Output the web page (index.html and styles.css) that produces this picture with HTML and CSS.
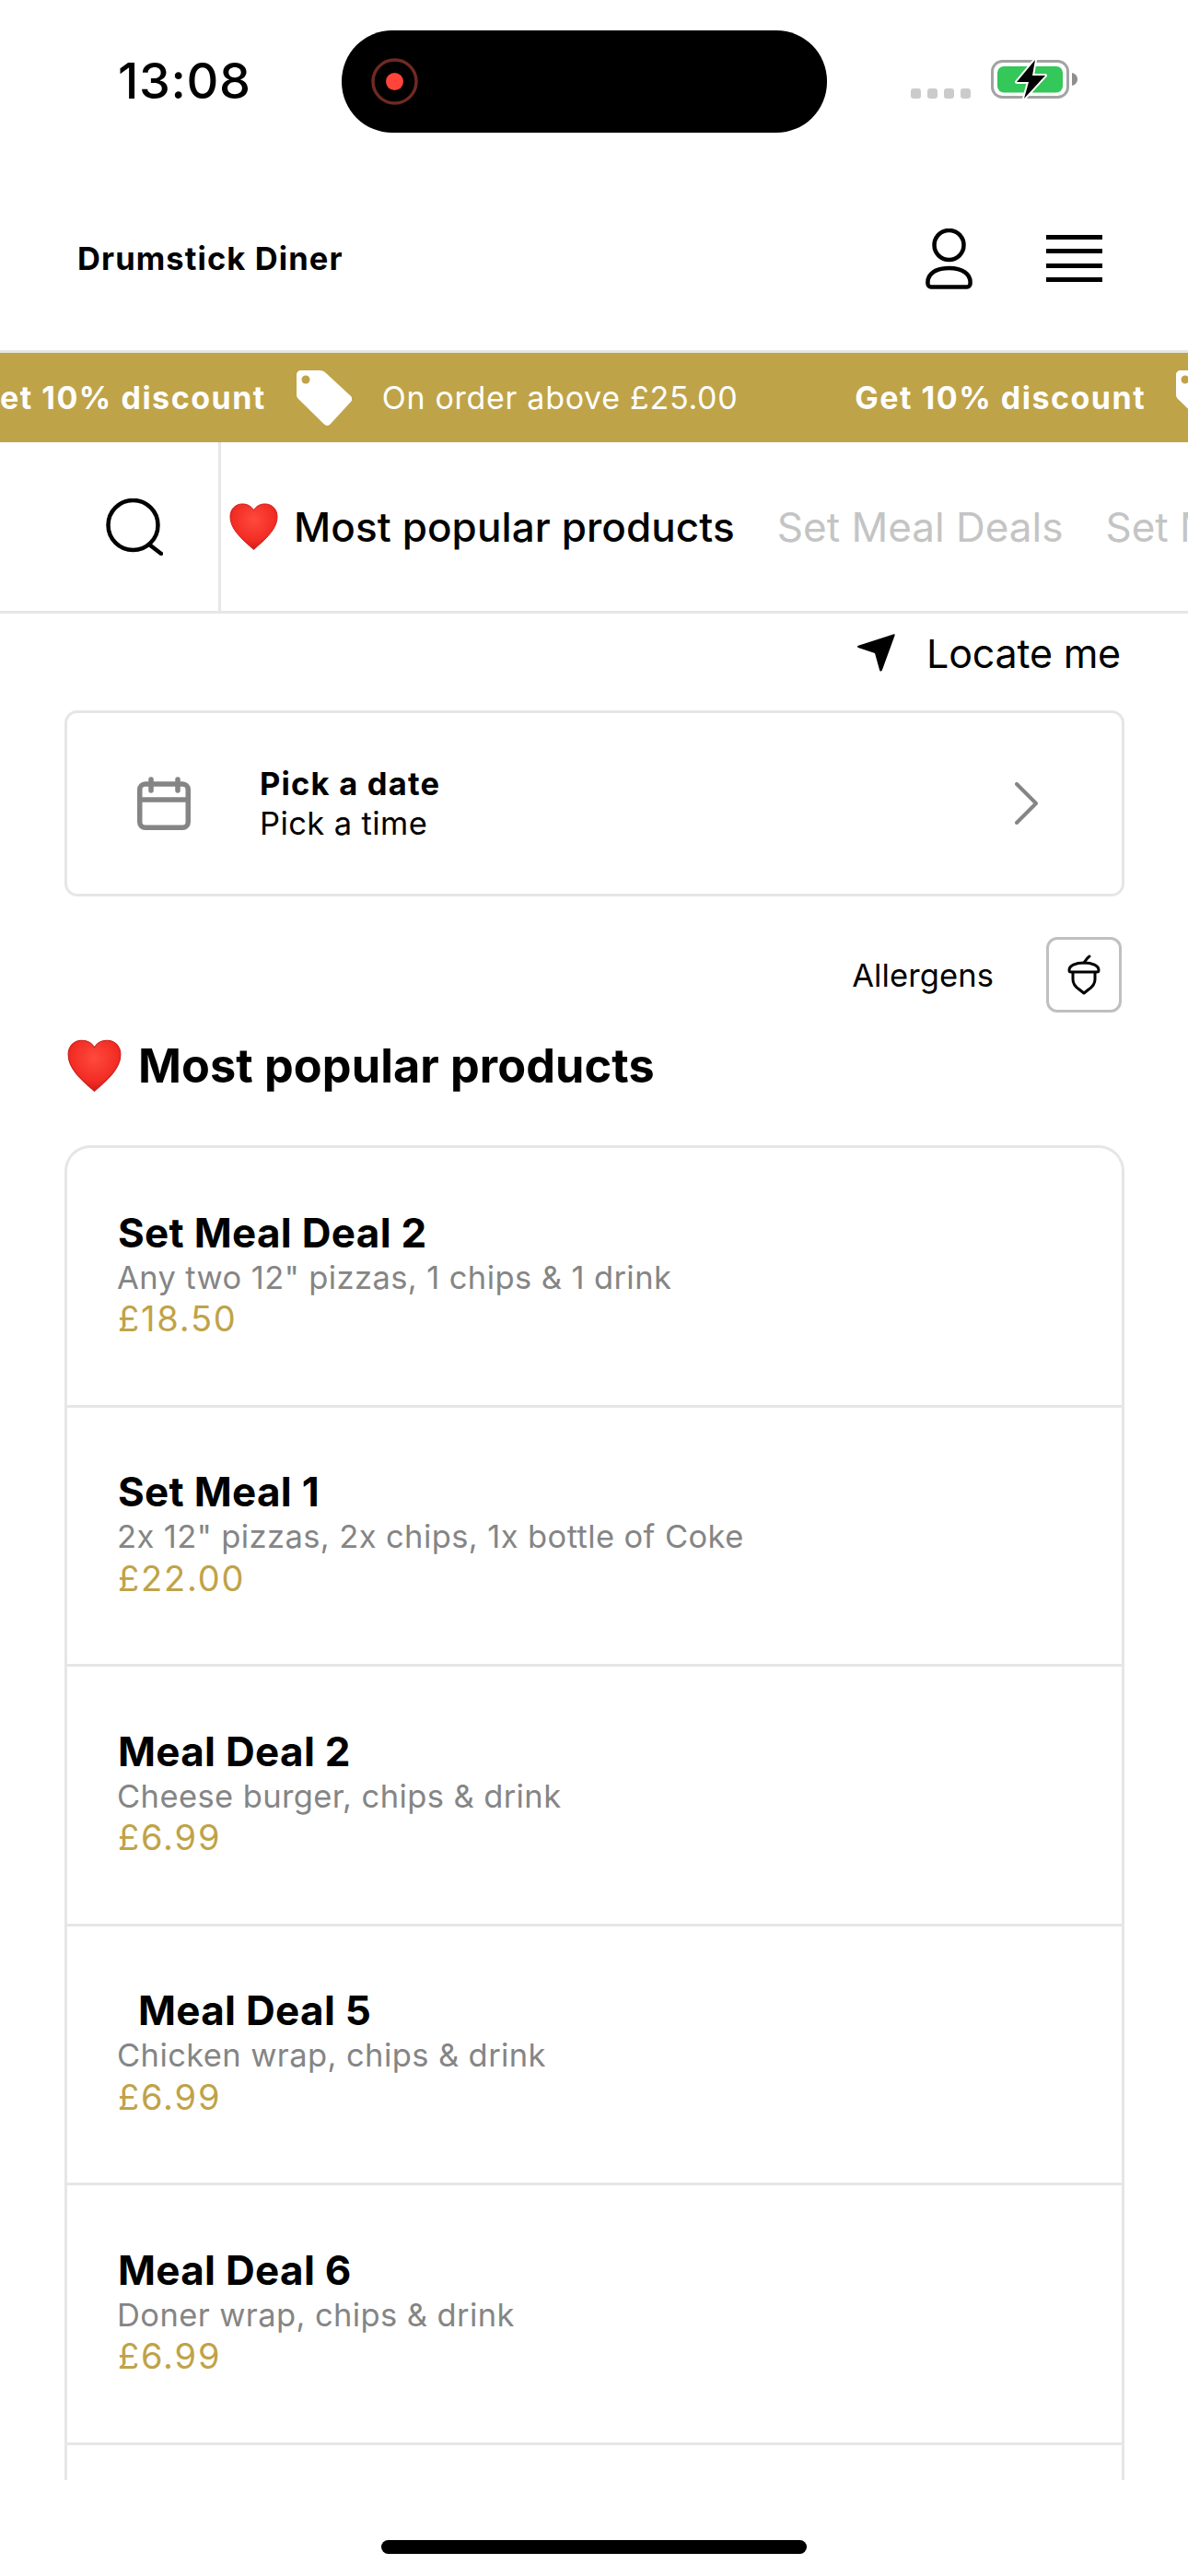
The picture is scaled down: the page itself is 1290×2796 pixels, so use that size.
FILE: index.html
```html
<!DOCTYPE html>
<html lang="en">
<head>
<meta charset="utf-8">
<title>Drumstick Diner</title>
<link rel="stylesheet" href="styles.css">
</head>
<body>
<div class="screen">
  <div class="status">
    <span class="time">13:08</span>
    <div class="island">
      <svg class="rec" viewBox="0 0 51 51" width="51" height="51"><circle cx="25.500" cy="25.500" r="23.500" fill="none" stroke="#6e2a22" stroke-width="3.500"/><circle cx="25.500" cy="25.500" r="9.500" fill="#ff453a"/></svg>
    </div>
    <div class="status-right">
      <div class="signal"><i></i><i></i><i></i><i></i></div>
      <svg class="battery" viewBox="0 0 95 44" width="95" height="44">
        <rect x="1.500" y="2.500" width="82" height="39" rx="11" fill="none" stroke="#a3a3a3" stroke-width="3"/>
        <rect x="7" y="8" width="71" height="28.500" rx="7" fill="#34c759"/>
        <path d="M88 15c4 1 6 4 6 7s-2 6-6 7z" fill="#8e8e8e"/>
        <path d="M48 1 28 25h13l-5 18 23-25H45z" fill="#000" stroke="#fff" stroke-width="4" stroke-linejoin="round" paint-order="stroke"/>
      </svg>
    </div>
  </div>

  <header class="topbar">
    <span class="brand">Drumstick Diner</span>
    <div class="top-icons">
      <svg viewBox="0 0 51 66" width="51" height="66"><circle cx="25.500" cy="18" r="16" fill="none" stroke="#000" stroke-width="4.500"/><path d="M2.500 60c-1-11 9-17 23-17s24 6 23 17c0 2-1.500 3.500-3.500 3.500H6c-2 0-3.500-1.500-3.500-3.500z" fill="none" stroke="#000" stroke-width="4.500"/></svg>
      <div class="burger"><i></i><i></i><i></i><i></i></div>
    </div>
  </header>

  <div class="promo">
    <div class="promo-track">
      <b>Get 10% discount</b>
      <svg class="tag" viewBox="0 0 60 60" width="60" height="60"><path d="M5 0h20c3 0 5 1 7 3l27 25c1.500 1.500 1.500 4 .5 5.500L37 58c-2 2.500-5 2.500-7 .5L2 31c-1.500-1.500-2-3-2-5V5c0-3 2-5 5-5z" fill="#fff"/><circle cx="10" cy="10" r="4.500" fill="#bfa348"/></svg>
      <span class="promo-note">On order above £25.00</span>
      <b>Get 10% discount</b>
      <svg class="tag" viewBox="0 0 60 60" width="60" height="60"><path d="M5 0h20c3 0 5 1 7 3l27 25c1.500 1.500 1.500 4 .5 5.500L37 58c-2 2.500-5 2.500-7 .5L2 31c-1.500-1.500-2-3-2-5V5c0-3 2-5 5-5z" fill="#fff"/><circle cx="10" cy="10" r="4.500" fill="#bfa348"/></svg>
    </div>
  </div>

  <nav class="cats">
    <div class="search-cell">
      <svg viewBox="0 0 62 62" width="62" height="62"><circle cx="29.500" cy="29" r="27" fill="none" stroke="#000" stroke-width="4.500"/><path d="M47 50l13 10" stroke="#000" stroke-width="4.500" stroke-linecap="round"/></svg>
    </div>
    <div class="cat-list">
      <span class="cat active"><svg class="heart-sm" viewBox="0 0 54 52" width="53" height="51"><use href="#heart"/></svg>Most popular products</span>
      <span class="cat">Set Meal Deals</span>
      <span class="cat">Set Meal Deals</span>
    </div>
  </nav>

  <main class="content">
    <div class="locate">
      <svg viewBox="0 0 41 41" width="41" height="41"><path d="M39 .5c1.500-.5 2 0 1.500 1.500L27 39c-.8 2-2.500 2-3 0l-5-18L1 15c-1.500-.5-1.500-1.500 0-2.200z" fill="#000"/></svg>
      <span>Locate me</span>
    </div>

    <div class="picker">
      <svg class="cal" viewBox="0 0 58 58" width="58" height="58"><rect x="2.750" y="8" width="52.500" height="47.250" rx="6" fill="none" stroke="#858585" stroke-width="5.500"/><path d="M2.500 25h53" stroke="#858585" stroke-width="5.500"/><path d="M15 3v12M44 3v12" stroke="#858585" stroke-width="5.500" stroke-linecap="round"/></svg>
      <div class="picker-text"><strong>Pick a date</strong><span>Pick a time</span></div>
      <svg class="chev" viewBox="0 0 25 46" width="25" height="46"><path d="M2 2l21 21L2 44" fill="none" stroke="#858585" stroke-width="4" stroke-linecap="round" stroke-linejoin="round"/></svg>
    </div>

    <div class="allergens">
      <span>Allergens</span>
      <div class="allergen-btn">
        <svg viewBox="0 0 36 44" width="36" height="44"><path d="M18 9c2-3 3-5 6-7" fill="none" stroke="#000" stroke-width="3" stroke-linecap="round"/><path d="M2 17c0-5 7-8 16-8s16 3 16 8c0 1.500-1 2-2 2H4c-1 0-2-.5-2-2z" fill="none" stroke="#000" stroke-width="3" stroke-linejoin="round"/><path d="M6 19v8c0 6 4 9 7 11l5 4 5-4c3-2 7-5 7-11v-8" fill="none" stroke="#000" stroke-width="3" stroke-linejoin="round"/></svg>
      </div>
    </div>

    <h1 class="section-title"><svg class="heart-lg" viewBox="0 0 54 52" width="59" height="57"><use href="#heart"/></svg>Most popular products</h1>

    <div class="products">
      <article class="product"><h2>Set Meal Deal 2</h2><p>Any two 12" pizzas, 1 chips &amp; 1 drink</p><div class="price">£18.50</div></article>
      <article class="product"><h2>Set Meal 1</h2><p>2x 12" pizzas, 2x chips, 1x bottle of Coke</p><div class="price">£22.00</div></article>
      <article class="product"><h2>Meal Deal 2</h2><p>Cheese burger, chips &amp; drink</p><div class="price">£6.99</div></article>
      <article class="product"><h2 class="indent">Meal Deal 5</h2><p>Chicken wrap, chips &amp; drink</p><div class="price">£6.99</div></article>
      <article class="product"><h2>Meal Deal 6</h2><p>Doner wrap, chips &amp; drink</p><div class="price">£6.99</div></article>
      <article class="product"></article>
    </div>
  </main>
  <div class="home-bar"><i></i></div>
</div>
<svg class="defs" width="0" height="0" aria-hidden="true">
  <defs>
    <radialGradient id="hg" cx=".5" cy=".35" r=".7"><stop offset="0" stop-color="#ff4a3d"/><stop offset=".65" stop-color="#f22c24"/><stop offset="1" stop-color="#c81414"/></radialGradient>
    <symbol id="heart" viewBox="0 0 54 52"><path d="M27 51.500C14 40 1 29 1 15 1 6.500 7 1 14.500 1 20 1 24.500 3.500 27 8c2.500-4.500 7-7 12.500-7C47 1 53 6.500 53 15c0 14-13 25-26 36.500z" fill="url(#hg)" stroke="#c9201a" stroke-width="1"/></symbol>
  </defs>
</svg>
</body>
</html>
```
FILE: styles.css
```css
* { box-sizing: border-box; }
html, body { margin: 0; padding: 0; background: #fff; }
body { font-family: Inter, "Liberation Sans", sans-serif; color: #000; font-feature-settings: "calt" 0; }
.screen { width: 1290px; height: 2796px; overflow: hidden; position: relative; display: flex; flex-direction: column; }

.status { height: 181px; flex: none; position: relative; }
.time { position: absolute; left: 128px; top: 56px; font-size: 54px; line-height: 64px; font-weight: 500; letter-spacing: .6px; }
.island { position: absolute; left: 371px; top: 33px; width: 527px; height: 111px; border-radius: 55px; background: #000; display: flex; align-items: center; padding-left: 32px; }
.status-right { position: absolute; left: 989px; top: 64px; display: flex; align-items: flex-end; gap: 22px; }
.signal { display: flex; gap: 7px; padding-bottom: 1px; }
.signal i { width: 11px; height: 11px; border-radius: 3px; background: #cbcbcb; }

.topbar { height: 199px; flex: none; padding: 0 93px 0 84px; display: flex; align-items: center; justify-content: space-between; }
.brand { font-size: 34.500px; font-weight: 700; letter-spacing: 1.100px; }
.top-icons { display: flex; align-items: center; gap: 80px; }
.burger { width: 61px; display: flex; flex-direction: column; gap: 10.300px; }
.burger i { height: 5px; background: #000; }

.promo { height: 100px; flex: none; background: #bfa348; border-top: 3px solid #e6e6e2; overflow: hidden; color: #fff; }
.promo-track { height: 100%; display: flex; align-items: center; margin-left: -27px; white-space: nowrap; font-size: 34px; }
.promo-track b { font-weight: 700; letter-spacing: 1.500px; }
.tag { margin-left: 33px; flex: none; }
.promo-note { margin-left: 33px; font-weight: 400; margin-right: 127px; letter-spacing: .7px; }

.cats { height: 186px; flex: none; display: flex; border-bottom: 3px solid #e6e6e6; overflow: hidden; }
.search-cell { width: 240px; flex: none; border-right: 3px solid #e6e6e6; display: flex; align-items: center; padding-left: 115px; }
.cat-list { display: flex; align-items: center; gap: 46px; padding-left: 9px; white-space: nowrap; font-size: 44px; color: #c4c4c4; }
.cat { display: flex; align-items: center; }
.cat.active { color: #000; font-weight: 500; letter-spacing: .1px; }
.heart-sm { margin-right: 17px; flex: none; }

.content { flex: 1; padding: 0 69px 0 70px; min-height: 0; display: flex; flex-direction: column; }
.locate { height: 105px; flex: none; display: flex; justify-content: flex-end; align-items: center; gap: 34px; font-size: 43px; letter-spacing: -.2px; margin-right: 4px; padding-bottom: 20px; }
.locate svg { flex: none; }
.picker { height: 202px; flex: none; border: 3px solid #e6e6e6; border-radius: 14px; display: flex; align-items: center; padding: 0 91px 0 76px; }
.picker-text { display: flex; flex-direction: column; margin-left: 75px; font-size: 34.500px; line-height: 43px; flex: 1; }
.picker-text strong { font-weight: 700; letter-spacing: 1.200px; }
.picker-text span { letter-spacing: .4px; }
.allergens { height: 82px; margin-top: 44px; flex: none; display: flex; justify-content: flex-end; align-items: center; gap: 57px; font-size: 34.500px; letter-spacing: .1px; margin-right: 3px; }
.allergen-btn { width: 82px; height: 82px; border: 3px solid #c0c0c0; border-radius: 12px; display: flex; align-items: center; justify-content: center; }

.section-title { margin: 18px 0 0; height: 78px; flex: none; display: flex; align-items: center; font-size: 50.400px; font-weight: 700; letter-spacing: .1px; padding-left: 3px; }
.heart-lg { margin-right: 18px; flex: none; }

.products { margin-top: 48px; flex: 1; min-height: 0; border: 3px solid #e6e6e6; border-bottom: 0; border-radius: 28px 28px 0 0; overflow: hidden; }
.product { height: 281.500px; border-bottom: 3px solid #e6e6e6; padding: 66.500px 0 0 55px; }
.product h2 { margin: 0; font-size: 44px; line-height: 50px; font-weight: 700; letter-spacing: .3px; }
.product h2.indent { padding-left: 22px; }
.product p { margin: 3px 0 0 -1px; font-size: 34.500px; line-height: 42px; color: #858585; letter-spacing: .4px; }
.product .price { font-size: 38px; line-height: 50px; color: #bfa348; margin-top: -1.500px; letter-spacing: 1.800px; }

.home-bar { height: 104px; flex: none; display: flex; align-items: flex-start; justify-content: center; padding-top: 65px; }
.home-bar i { width: 462px; height: 15px; border-radius: 8px; background: #000; }
.defs { position: absolute; }
```
